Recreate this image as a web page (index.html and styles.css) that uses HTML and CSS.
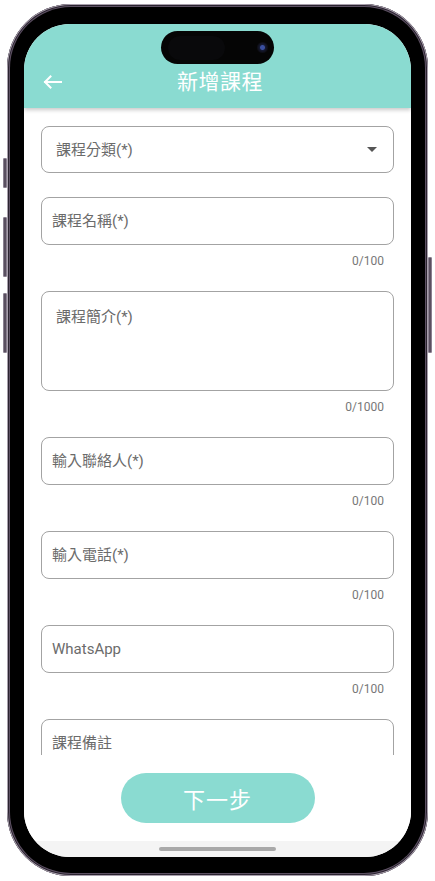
FILE: index.html
```html
<!DOCTYPE html>
<html lang="zh-Hant">
<head>
<meta charset="utf-8">
<title>新增課程</title>
<link rel="stylesheet" href="styles.css">
</head>
<body>
<div class="device">
  <span class="side-btn btn-silent"></span>
  <span class="side-btn btn-vol-up"></span>
  <span class="side-btn btn-vol-down"></span>
  <span class="side-btn btn-power"></span>
  <div class="bezel">
    <div class="screen">
      <div class="island"><span class="island-sensor"></span><span class="island-cam"></span></div>
      <header class="appbar">
        <div class="toolbar">
          <button class="back" aria-label="返回">
            <svg width="20" height="14" viewBox="0 0 20 14" fill="none" stroke="#ffffff" stroke-width="2" stroke-linecap="square">
              <path d="M2 7H18"/>
              <path d="M7.5 1.5L2 7L7.5 12.5"/>
            </svg>
          </button>
          <h1 class="title">新增課程</h1>
          <span class="spacer"></span>
        </div>
      </header>
      <main class="content">
        <div class="group group-first">
          <div class="field field-select"><span class="label">課程分類(*)</span><span class="caret"></span></div>
        </div>
        <div class="group">
          <div class="field"><span class="label">課程名稱(*)</span></div>
          <div class="counter">0/100</div>
        </div>
        <div class="group">
          <div class="field field-area"><span class="label">課程簡介(*)</span></div>
          <div class="counter">0/1000</div>
        </div>
        <div class="group">
          <div class="field"><span class="label">輸入聯絡人(*)</span></div>
          <div class="counter">0/100</div>
        </div>
        <div class="group">
          <div class="field"><span class="label">輸入電話(*)</span></div>
          <div class="counter">0/100</div>
        </div>
        <div class="group">
          <div class="field"><span class="label">WhatsApp</span></div>
          <div class="counter">0/100</div>
        </div>
        <div class="group">
          <div class="field"><span class="label">課程備註</span></div>
        </div>
      </main>
      <footer class="actions">
        <button class="next">下一步</button>
      </footer>
      <div class="homebar"><span class="home-indicator"></span></div>
    </div>
  </div>
</div>
</body>
</html>
```

FILE: styles.css
```css
* {
  box-sizing: border-box;
}

html, body {
  margin: 0;
  padding: 0;
  background: #ffffff;
}

body {
  font-family: Roboto, "Noto Sans CJK TC", "Noto Sans", sans-serif;
  width: 435px;
  height: 881px;
  overflow: hidden;
}

.device {
  position: relative;
  width: 421px;
  height: 872px;
  margin: 4px 0 0 7px;
  padding: 3px;
  border-radius: 64px;
  background: #3a3040;
  box-shadow: inset 0 0 0 1px #a89fac, inset 0 0 0 2px #2b2430;
}

.side-btn {
  position: absolute;
  width: 4px;
  background: #5a5060;
  border: 1px solid #8a8090;
  border-radius: 1px;
}

.btn-silent { left: -4px; top: 154px; height: 30px; }
.btn-vol-up { left: -4px; top: 213px; height: 60px; }
.btn-vol-down { left: -4px; top: 289px; height: 60px; }
.btn-power { right: -4px; top: 253px; height: 96px; }

.bezel {
  width: 100%;
  height: 100%;
  padding: 17px 14px 16px 14px;
  border-radius: 61px;
  background: #000000;
  box-shadow: 0 0 0 1px #5d5163;
}

.screen {
  position: relative;
  width: 387px;
  height: 833px;
  border-radius: 46px;
  overflow: hidden;
  background: #ffffff;
  display: flex;
  flex-direction: column;
}

.island {
  position: absolute;
  top: 7px;
  left: 137px;
  width: 113px;
  height: 33px;
  border-radius: 17px;
  background: #050505;
  z-index: 5;
  display: flex;
  align-items: center;
  justify-content: space-between;
  padding: 0 6px 0 7px;
}

.island-sensor {
  width: 57px;
  height: 24px;
  border-radius: 12px;
  background: #09090b;
}

.island-cam {
  width: 11px;
  height: 11px;
  border-radius: 50%;
  background: radial-gradient(circle, #3a4fa0 0 2px, #151a33 3px, #0e0e16 5px);
}

.appbar {
  flex: none;
  height: 84px;
  padding-top: 36px;
  background: #8adbd1;
  box-shadow: 0 2px 4px rgba(0, 0, 0, 0.22);
  position: relative;
  z-index: 2;
}

.toolbar {
  height: 44px;
  display: grid;
  grid-template-columns: 56px 1fr 56px;
  align-items: center;
}

.back {
  width: 56px;
  height: 44px;
  padding: 0 0 0 1px;
  border: 0;
  background: transparent;
  display: flex;
  align-items: center;
  justify-content: center;
}

.back svg {
  display: block;
}

.title {
  margin: 0;
  padding-left: 5px;
  text-align: center;
  color: #ffffff;
  font-size: 21px;
  font-weight: 400;
  line-height: 28px;
  letter-spacing: 0.5px;
}

.content {
  flex: 1;
  overflow: hidden;
  padding: 18px 17px 0 17px;
}

.group {
  margin-bottom: 22px;
}

.group-first {
  margin-bottom: 24px;
}

.field {
  height: 48px;
  border: 1px solid #a3a3a3;
  border-radius: 8px;
  display: flex;
  align-items: center;
  padding: 0 10px;
  color: #6b6b6b;
  font-size: 15px;
  line-height: 20px;
}

.field-select {
  height: 47px;
  padding: 0 16px 0 14px;
  justify-content: space-between;
}

.caret {
  width: 0;
  height: 0;
  border-left: 5px solid transparent;
  border-right: 5px solid transparent;
  border-top: 5px solid #555555;
}

.field-area {
  height: 100px;
  align-items: flex-start;
  padding: 15px 14px;
}

.counter {
  margin-top: 8px;
  padding-right: 10px;
  text-align: right;
  font-size: 12px;
  line-height: 16px;
  color: #777777;
}

.actions {
  flex: none;
  height: 86px;
  display: flex;
  align-items: center;
  justify-content: center;
  background: #ffffff;
}

.next {
  width: 194px;
  height: 50px;
  border: 0;
  border-radius: 25px;
  background: #8adbd1;
  color: #ffffff;
  font-family: Roboto, "Noto Sans CJK TC", sans-serif;
  font-size: 22px;
  letter-spacing: 1px;
  padding: 0;
}

.homebar {
  flex: none;
  height: 16px;
  padding-top: 6px;
  background: #f4f4f4;
  display: flex;
  justify-content: center;
  align-items: flex-start;
}

.home-indicator {
  width: 117px;
  height: 4px;
  border-radius: 2px;
  background: #a9a9a9;
}
```
